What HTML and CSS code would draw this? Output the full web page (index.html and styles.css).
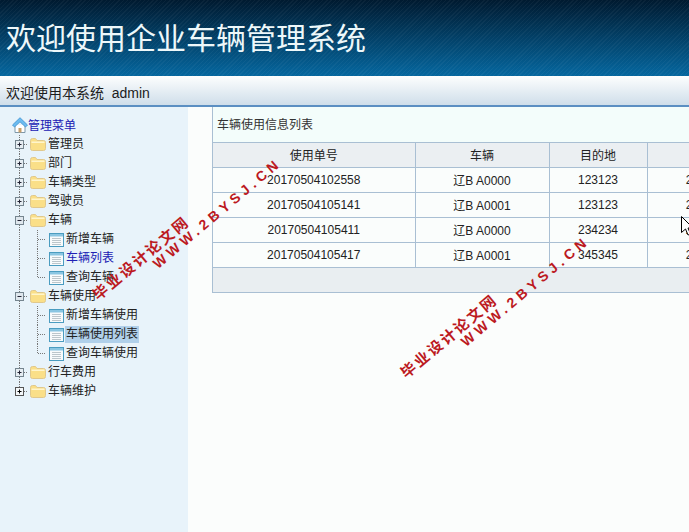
FILE: index.html
```html
<!DOCTYPE html>
<html lang="zh">
<head>
    <meta charset="UTF-8">
    <meta name="viewport" content="width=device-width, initial-scale=1.0">
    <title>企业车辆管理系统</title>
    <link rel="stylesheet" href="styles.css">
</head>
<body>
    <!-- значки дерева -->
    <svg class="defs" width="0" height="0">
        <defs>
            <symbol id="home" viewBox="0 0 16 16">
                <path d="M3 8v7.500h10V8" fill="#fff" stroke="#7d98aa"/>
                <path d="M6.500 15.500v-4.500h3v4.500" fill="#c9a06a"/>
                <path d="M.5 8 8 .7 15.500 8l-2 2L8 4.800 2.500 10z" fill="#6cbcf0" stroke="#3a8fd0" stroke-width=".8"/>
            </symbol>
            <symbol id="folder" viewBox="0 0 16 13">
                <path d="M.5 2.500q0-2 2-2h3l1.500 2h6.500q2 0 2 2v6q0 2-2 2h-11q-2 0-2-2z" fill="#fadf88" stroke="#e0c88c"/>
                <path d="M1.500 3.500h13v1.500h-13z" fill="#fff5cc"/>
            </symbol>
            <symbol id="page" viewBox="0 0 15 14">
                <rect x=".5" y=".5" width="14" height="13" fill="#f8fbfc" stroke="#4a9cc0"/>
                <rect x="1" y="1" width="13" height="2.500" fill="#8ac6e2"/>
                <path d="M3 5.500h9M3 7.500h9M3 9.500h9M3 11.500h9" stroke="#bcc6cb"/>
            </symbol>
            <symbol id="plus" viewBox="0 0 18 19">
                <path d="M9.500 0v5M9.500 14v5M14 9.500h4" stroke="#777" stroke-dasharray="1 1"/>
                <rect x="5.500" y="5.500" width="8" height="8" fill="#e6edf2" stroke="#75858f"/>
                <path d="M7.500 9.500h4M9.500 7.500v4" stroke="#223"/>
            </symbol>
            <symbol id="plus-last" viewBox="0 0 18 19">
                <path d="M9.500 0v5M14 9.500h4" stroke="#777" stroke-dasharray="1 1"/>
                <rect x="5.500" y="5.500" width="8" height="8" fill="#f4f7f9" stroke="#555"/>
                <path d="M7.500 9.500h4M9.500 7.500v4" stroke="#000"/>
            </symbol>
            <symbol id="minus" viewBox="0 0 18 19">
                <path d="M9.500 0v5M9.500 14v5M14 9.500h4" stroke="#777" stroke-dasharray="1 1"/>
                <rect x="5.500" y="5.500" width="8" height="8" fill="#dfe7ed" stroke="#75858f"/>
                <path d="M7.500 9.500h4" stroke="#223"/>
            </symbol>
            <symbol id="line" viewBox="0 0 18 19">
                <path d="M9.500 0v19" stroke="#777" stroke-dasharray="1 1"/>
            </symbol>
            <symbol id="join" viewBox="0 0 18 19">
                <path d="M9.500 0v19M10 9.500h8" stroke="#777" stroke-dasharray="1 1"/>
            </symbol>
            <symbol id="join-last" viewBox="0 0 18 19">
                <path d="M9.500 0v9.500h8.500" fill="none" stroke="#777" stroke-dasharray="1 1"/>
            </symbol>
        </defs>
    </svg>

    <header class="top">
        <h1>欢迎使用企业车辆管理系统</h1>
    </header>
    <div class="welcome">欢迎使用本系统&nbsp;&nbsp;admin</div>

    <div class="main">
        <aside class="side">
            <div class="root"><svg class="home"><use href="#home"/></svg><a>管理菜单</a></div>

            <div class="node"><svg class="c"><use href="#plus"/></svg><svg class="folder"><use href="#folder"/></svg><span>管理员</span></div>
            <div class="node"><svg class="c"><use href="#plus"/></svg><svg class="folder"><use href="#folder"/></svg><span>部门</span></div>
            <div class="node"><svg class="c"><use href="#plus"/></svg><svg class="folder"><use href="#folder"/></svg><span>车辆类型</span></div>
            <div class="node"><svg class="c"><use href="#plus"/></svg><svg class="folder"><use href="#folder"/></svg><span>驾驶员</span></div>
            <div class="node"><svg class="c"><use href="#minus"/></svg><svg class="folder"><use href="#folder"/></svg><span>车辆</span></div>
            <div class="node"><svg class="c"><use href="#line"/></svg><svg class="c"><use href="#join"/></svg><svg class="page"><use href="#page"/></svg><span>新增车辆</span></div>
            <div class="node"><svg class="c"><use href="#line"/></svg><svg class="c"><use href="#join"/></svg><svg class="page"><use href="#page"/></svg><a>车辆列表</a></div>
            <div class="node"><svg class="c"><use href="#line"/></svg><svg class="c"><use href="#join-last"/></svg><svg class="page"><use href="#page"/></svg><span>查询车辆</span></div>
            <div class="node"><svg class="c"><use href="#minus"/></svg><svg class="folder"><use href="#folder"/></svg><span>车辆使用</span></div>
            <div class="node"><svg class="c"><use href="#line"/></svg><svg class="c"><use href="#join"/></svg><svg class="page"><use href="#page"/></svg><span>新增车辆使用</span></div>
            <div class="node"><svg class="c"><use href="#line"/></svg><svg class="c"><use href="#join"/></svg><svg class="page"><use href="#page"/></svg><span class="selected">车辆使用列表</span></div>
            <div class="node"><svg class="c"><use href="#line"/></svg><svg class="c"><use href="#join-last"/></svg><svg class="page"><use href="#page"/></svg><span>查询车辆使用</span></div>
            <div class="node"><svg class="c"><use href="#plus"/></svg><svg class="folder"><use href="#folder"/></svg><span>行车费用</span></div>
            <div class="node"><svg class="c"><use href="#plus-last"/></svg><svg class="folder"><use href="#folder"/></svg><span>车辆维护</span></div>
        </aside>

        <section class="content">
            <div class="panel">
                <div class="panel-title">车辆使用信息列表</div>
                <table class="grid">
                    <colgroup>
                        <col class="col-no"><col class="col-car"><col class="col-dest"><col class="col-date">
                    </colgroup>
                    <thead>
                        <tr><th>使用单号</th><th>车辆</th><th>目的地</th><th></th></tr>
                    </thead>
                    <tbody>
                        <tr><td>20170504102558</td><td>辽B A0000</td><td>123123</td><td>2017-05-04</td></tr>
                        <tr><td>20170504105141</td><td>辽B A0001</td><td>123123</td><td>2017-05-04</td></tr>
                        <tr><td>20170504105411</td><td>辽B A0000</td><td>234234</td><td>2017-05-04</td></tr>
                        <tr><td>20170504105417</td><td>辽B A0001</td><td>345345</td><td>2017-05-04</td></tr>
                    </tbody>
                </table>
                <div class="panel-foot"></div>
            </div>
        </section>
    </div>

    <!-- водяные знаки поверх страницы -->
    <div class="mark mark-a"><div class="mark-cn">毕业设计论文网</div><div class="mark-en">WWW.2BYSJ.CN</div></div>
    <div class="mark mark-b"><div class="mark-cn">毕业设计论文网</div><div class="mark-en">WWW.2BYSJ.CN</div></div>

    <svg class="cursor" width="12" height="20" viewBox="0 0 12 20">
        <path d="M.5.500v16l4-3.500 2.500 6 2.500-1-2.500-6h5z" fill="#fff" stroke="#000"/>
    </svg>
</body>
</html>
```

FILE: styles.css
```css
html, body {
    height: 100%;
}

body {
    margin: 0;
    overflow: hidden;
    display: flex;
    flex-direction: column;
    font-family: "Liberation Sans", "Noto Sans CJK SC", sans-serif;
    font-size: 12px;
    color: #222;
    background: #fbfdfc;
}

.defs {
    position: absolute;
}

.top {
    height: 72px;
    flex: none;
    display: flex;
    align-items: center;
    padding: 0 0 4px 6px;
    background:
        repeating-linear-gradient(135deg, rgba(255, 255, 255, 0.04) 0, rgba(255, 255, 255, 0.04) 1px, transparent 1px, transparent 3px),
        linear-gradient(to bottom, #001a30, #05679f);
}

.top h1 {
    margin: 0;
    font-size: 30px;
    font-weight: normal;
    color: #eef8fa;
}

.welcome {
    height: 29px;
    line-height: 35px;
    flex: none;
    padding-left: 6px;
    font-size: 14px;
    color: #1c1c1c;
    background: linear-gradient(to bottom, #fdfefe, #cfdeea);
    border-bottom: 2px solid #5b8fc2;
}

.main {
    flex: 1;
    display: flex;
}

/* дерево слева */
.side {
    width: 178px;
    padding: 9px 0 0 10px;
    background: #e8f3fa;
}

.root {
    height: 19px;
    display: flex;
    align-items: flex-start;
}

.home {
    width: 16px;
    height: 16px;
    margin: 1px 0 0 2px;
}

.node {
    height: 19px;
    display: flex;
    align-items: center;
}

.node .c {
    width: 18px;
    height: 19px;
    flex: none;
}

.folder {
    width: 16px;
    height: 13px;
    flex: none;
    margin: 0 1px 0 2px;
}

.page {
    width: 15px;
    height: 14px;
    flex: none;
    margin: 0 1px 0 3px;
}

.node span, .node a {
    padding: 0 1px;
    line-height: 17px;
}

.side a {
    color: #2020b4;
}

.selected {
    background: #b0d0ea;
}

/* таблица */
.content {
    flex: 1;
    min-width: 0;
    padding-left: 24px;
}

.panel {
    border-left: 1px solid #a9bfd3;
}

.panel-title {
    height: 35px;
    line-height: 37px;
    padding-left: 4px;
    color: #333;
    background: #f3fdfb;
}

.grid {
    width: 573px;
    table-layout: fixed;
    border-collapse: collapse;
}

.col-no { width: 202px; }
.col-car { width: 134px; }
.col-dest { width: 98px; }
.col-date { width: 139px; }

.grid th, .grid td {
    height: 23px;
    padding: 0 0 1px;
    text-align: center;
    font-weight: normal;
    border: 1px solid #a9bfd3;
}

.grid th {
    background: #ebeff2;
}

.grid td {
    background: #fafdfc;
}

.grid th:first-child, .grid td:first-child {
    border-left: none;
}

.panel-foot {
    height: 24px;
    background: #e9eef1;
    border-bottom: 1px solid #a9bfd3;
}

/* водяной знак */
.mark {
    position: absolute;
    transform: rotate(-40deg);
    transform-origin: left top;
    white-space: nowrap;
    font-weight: bold;
    color: #bc1a1f;
    line-height: 15px;
}

.mark-a {
    left: 90px;
    top: 291px;
}

.mark-b {
    left: 398px;
    top: 369px;
}

.mark-cn {
    font-size: 15px;
    letter-spacing: 2.200px;
}

.mark-en {
    margin-left: 66px;
    font-size: 14px;
    letter-spacing: 4.300px;
}

.cursor {
    position: absolute;
    left: 681px;
    top: 216px;
}
```
